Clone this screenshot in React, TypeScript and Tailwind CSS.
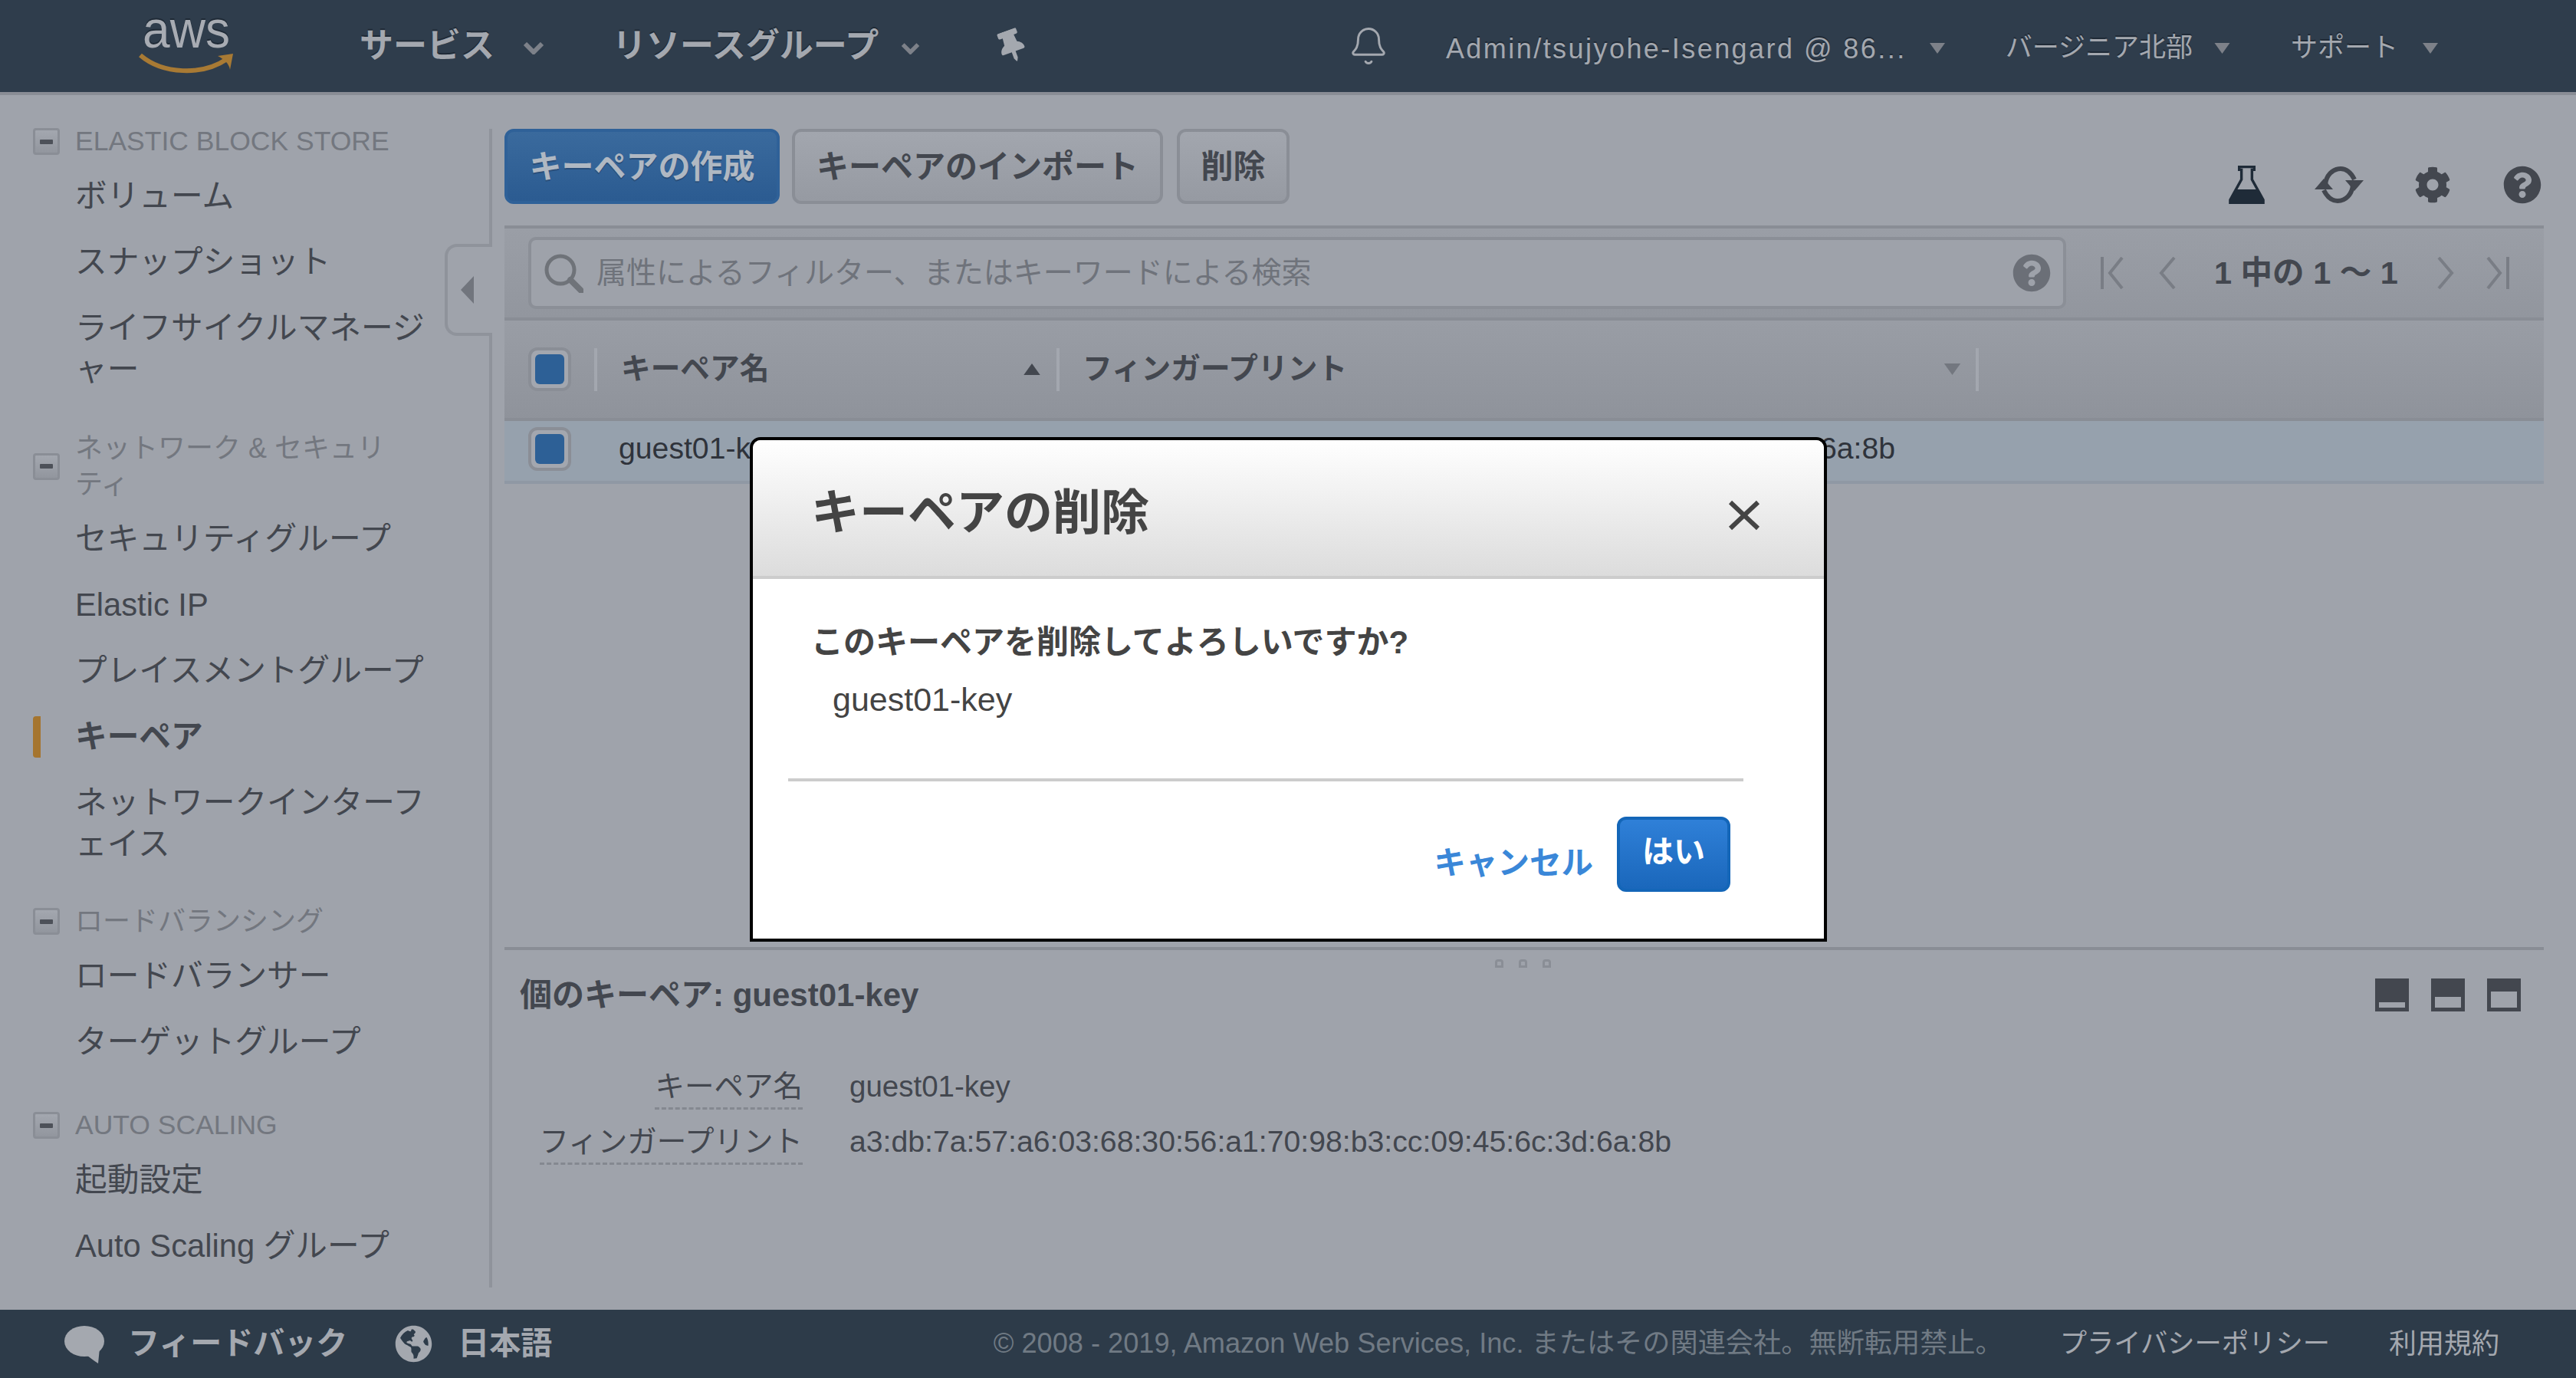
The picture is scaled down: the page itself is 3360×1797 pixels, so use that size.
import React from "react";
import { Bell } from "lucide-react";
import { FaCog, FaGlobeAmericas, FaQuestionCircle, FaThumbtack } from "react-icons/fa";

function Tri({ className }: { className: string }) {
  return (
    <svg viewBox="0 0 20 14" className={className} fill="currentColor">
      <path d="M0 0H20L10 14Z" />
    </svg>
  );
}

function Chevron({ className }: { className: string }) {
  return (
    <svg viewBox="0 0 28 16" className={className} fill="none" stroke="currentColor" strokeWidth="6">
      <path d="M3 2L14 13L25 2" />
    </svg>
  );
}

function AwsLogo() {
  return (
    <svg viewBox="0 0 122 120" className="h-[120px] w-[122px] shrink-0 overflow-visible">
      <text x="4" y="62" textLength="114" lengthAdjust="spacingAndGlyphs" fontFamily="'Liberation Sans', sans-serif" fontSize="68" fill="#a8acb3">
        aws
      </text>
      <path d="M1 72C30 97 82 99 114 77" fill="none" stroke="#a87a34" strokeWidth="6" />
      <path d="M102 73L122 70L118 91C117 83 110 77 102 73Z" fill="#a87a34" />
    </svg>
  );
}

function Flask() {
  return (
    <svg viewBox="0 0 50 50" className="h-[50px] w-[49px] shrink-0">
      <path d="M15 1H35V5H32V18L47 45V50H3V45L18 18V5H15Z" fill="none" stroke="#1f2b38" strokeWidth="3.5" />
      <path d="M11 31H39L48 46V50H2V46Z" fill="#1f2b38" />
    </svg>
  );
}

function Refresh() {
  return (
    <svg viewBox="0 0 64 50" className="h-[50px] w-[64px] shrink-0" fill="none" stroke="#43474f" strokeWidth="6">
      <path d="M14 25C15 13 23 4 34 4C43 4 48 10 52 18" />
      <path d="M50 25C49 37 41 46 30 46C21 46 16 40 12 32" />
      <path d="M40 19H64L52 33Z" fill="#43474f" stroke="none" />
      <path d="M0 31H24L12 17Z" fill="#43474f" stroke="none" />
    </svg>
  );
}

function Search() {
  return (
    <svg viewBox="0 0 52 52" className="h-[52px] w-[52px] shrink-0" fill="none" stroke="#6f7379">
      <circle cx="22" cy="22" r="18" strokeWidth="5" />
      <path d="M35 35L49 49" strokeWidth="8" strokeLinecap="round" />
    </svg>
  );
}

function PagerIcon({ d, w }: { d: string; w: number }) {
  return (
    <svg viewBox={`0 0 ${w} 42`} style={{ width: w, height: 42 }} className="shrink-0" fill="none" stroke="#797d85" strokeWidth="4">
      <path d={d} />
    </svg>
  );
}

function Bubble() {
  return (
    <svg viewBox="0 0 53 50" className="h-[50px] w-[53px] shrink-0" fill="#a4a8af">
      <ellipse cx="26" cy="21" rx="26" ry="20" />
      <path d="M26 36L46 30L44 50C38 46 32 42 26 36Z" />
    </svg>
  );
}

function PanelIcon({ h }: { h: number }) {
  return (
    <div className="flex h-[43px] w-[44px] shrink-0 flex-col justify-end bg-[#43474f] px-[5px] pb-[5px]">
      <div className="bg-[#9fa3ab]" style={{ height: h }} />
    </div>
  );
}

function Collapse() {
  return (
    <div className="flex h-[35px] w-[35px] shrink-0 items-center justify-center rounded-[4px] border-[3px] border-[#8a8e96] bg-gradient-to-b from-[#a3a7af] to-[#92969e]">
      <div className="h-[6px] w-[17px] rounded-[1px] bg-[#4d5159]" />
    </div>
  );
}

function Heading({ className, children }: { className: string; children: React.ReactNode }) {
  return (
    <div className={`flex items-center gap-[20px] pl-[43px] leading-[47px] text-[#73777f] ${className}`}>
      <Collapse />
      <div className="whitespace-nowrap">{children}</div>
    </div>
  );
}

function Item({ children, active }: { children: React.ReactNode; active?: boolean }) {
  return (
    <div className={`flex items-center whitespace-nowrap py-[16px] pl-[43px] text-[41.7px] leading-[54px] ${active ? "font-bold" : ""}`}>
      <div className={`mr-[45px] h-[54px] w-[10px] rounded-l-[4px] ${active ? "bg-[#a5752f]" : ""}`} />
      <div>{children}</div>
    </div>
  );
}

function Check() {
  return (
    <div className="flex h-[57px] w-[56px] items-center justify-center rounded-[12px] border-4 border-[#8a8e96] bg-[#a3a7af]">
      <div className="h-[39px] w-[38px] rounded-[6px] bg-[#2d6096]" />
    </div>
  );
}

function GrayButton({ className, children }: { className: string; children: React.ReactNode }) {
  return (
    <button className={`flex h-[98px] items-center justify-center rounded-[12px] border-4 border-[#8a8e96] bg-gradient-to-b from-[#a2a6ae] to-[#969aa2] text-[42px] font-bold text-[#43474f] ${className}`}>
      {children}
    </button>
  );
}

export default function App() {
  return (
    <div className="relative flex h-screen w-full flex-col overflow-hidden bg-[#9fa3ab] text-[#43474f] [font-family:'Liberation_Sans','Noto_Sans_CJK_JP',sans-serif]">
      <header className="flex h-[124px] shrink-0 items-center border-b-4 border-[#898d95] bg-[#2f3d4c] pl-[182px] pr-[180px] text-[#a4a8af] [text-shadow:0_-2px_0_#1f2a36]">
        <AwsLogo />
        <span className="ml-[165px] text-[44px] font-bold">サービス</span>
        <Chevron className="ml-[37px] mt-[6px] h-[16px] w-[28px] text-[#7d8189]" />
        <span className="ml-[89px] text-[44px] font-bold">リソースグループ</span>
        <Chevron className="ml-[29px] mt-[6px] h-[15px] w-[25px] text-[#7d8189]" />
        <FaThumbtack className="ml-[101px] h-[42px] w-[37px] -rotate-[20deg] text-[#a4a8af]" />
        <Bell className="ml-auto h-[58px] w-[54px] text-[#a4a8af]" strokeWidth={1.3} />
        <span className="ml-[74px] mt-[8px] text-[36px] tracking-[2.45px]">Admin/tsujyohe-Isengard @ 86...</span>
        <Tri className="ml-[29px] mt-[6px] h-[14px] w-[22px] text-[#7d8189]" />
        <span className="ml-[78px] mt-[4px] text-[35px]">バージニア北部</span>
        <Tri className="ml-[28px] mt-[6px] h-[14px] w-[21px] text-[#7d8189]" />
        <span className="ml-[79px] mt-[4px] text-[35px]">サポート</span>
        <Tri className="ml-[32px] mt-[6px] h-[14px] w-[20px] text-[#7d8189]" />
      </header>

      <main className="flex min-h-0 flex-1">
        <aside className="relative mb-[29px] mt-[44px] w-[642px] shrink-0 border-r-4 border-[#8f939b]">
          <div className="-mt-[7px]">
            <Heading className="mb-[5px] text-[35.5px]">ELASTIC BLOCK STORE</Heading>
            <Item>ボリューム</Item>
            <Item>スナップショット</Item>
            <Item>
              ライフサイクルマネージ
              <br />
              ャー
            </Item>
            <Heading className="mb-[5px] mt-[36px] text-[36px]">
              ネットワーク &amp; セキュリ
              <br />
              ティ
            </Heading>
            <Item>セキュリティグループ</Item>
            <Item>Elastic IP</Item>
            <Item>プレイスメントグループ</Item>
            <Item active>キーペア</Item>
            <Item>
              ネットワークインターフ
              <br />
              ェイス
            </Item>
            <Heading className="mb-[5px] mt-[34px] text-[36px]">ロードバランシング</Heading>
            <Item>ロードバランサー</Item>
            <Item>ターゲットグループ</Item>
            <Heading className="mb-[5px] mt-[42px] text-[35.5px]">AUTO SCALING</Heading>
            <Item>起動設定</Item>
            <Item>Auto Scaling グループ</Item>
          </div>
          <div className="absolute -right-[4px] top-[150px] flex h-[120px] w-[62px] items-center rounded-l-[16px] border-y-4 border-l-4 border-[#8f939b] bg-[#9fa3ab] pl-[17px]">
            <div className="h-0 w-0 border-y-[18px] border-r-[17px] border-y-transparent border-r-[#71757d]" />
          </div>
        </aside>

        <section className="flex min-w-0 flex-1 flex-col pl-[16px] pr-[42px] pt-[44px]">
          <div className="flex h-[98px] shrink-0 items-start">
            <button className="flex h-[98px] w-[359px] items-center justify-center rounded-[12px] border-4 border-[#2f6198] bg-gradient-to-b from-[#3a6a9d] to-[#2b5b91] text-[42px] font-bold text-[#b0b8c2] [text-shadow:0_2px_0_#2a4f7a]">
              キーペアの作成
            </button>
            <GrayButton className="ml-[16px] w-[484px]">キーペアのインポート</GrayButton>
            <GrayButton className="ml-[18px] w-[147px]">削除</GrayButton>
            <div className="ml-auto mr-[3px] mt-[48px] flex items-center">
              <Flask />
              <div className="ml-[64px]">
                <Refresh />
              </div>
              <FaCog className="ml-[66px] h-[50px] w-[48px] text-[#43474f]" />
              <FaQuestionCircle className="ml-[68px] h-[50px] w-[50px] text-[#43474f]" />
            </div>
          </div>

          <div className="mt-[28px] flex h-[124px] shrink-0 items-center border-y-4 border-[#898d95] bg-gradient-to-b from-[#9a9ea6] to-[#92969e] pl-[31px]">
            <div className="flex h-[94px] w-[2006px] shrink-0 items-center rounded-[10px] border-4 border-[#8b8f97] bg-[#9ea2aa] pl-[16px] pr-[16px]">
              <Search />
              <span className="ml-[17px] text-[39px] text-[#6f737b]">属性によるフィルター、またはキーワードによる検索</span>
              <FaQuestionCircle className="ml-auto h-[50px] w-[50px] text-[#6b6f77]" />
            </div>
            <div className="ml-[45px] flex items-center">
              <PagerIcon w={30} d="M2 0V42M28 1L12 21L28 41" />
              <div className="ml-[45px]">
                <PagerIcon w={23} d="M21 1L4 21L21 41" />
              </div>
              <span className="ml-[50px] w-[237px] whitespace-nowrap text-center text-[41.5px] font-bold">1 中の 1 〜 1</span>
              <div className="ml-[54px]">
                <PagerIcon w={23} d="M2 1L19 21L2 41" />
              </div>
              <div className="ml-[41px]">
                <PagerIcon w={30} d="M28 0V42M2 1L18 21L2 41" />
              </div>
            </div>
          </div>

          <div className="flex h-[131px] shrink-0 items-center border-b-4 border-[#898d95] bg-gradient-to-b from-[#999da5] to-[#8f939b] text-[38.7px] font-bold">
            <div className="flex w-[117px] justify-center">
              <Check />
            </div>
            <div className="flex h-[56px] w-[603px] items-center border-l-4 border-[#a3a7af] pl-[31px] pr-[21px]">
              <span>キーペア名</span>
              <Tri className="ml-auto h-[15px] w-[22px] rotate-180 text-[#43474f]" />
            </div>
            <div className="flex h-[56px] w-[1203px] items-center border-x-4 border-[#a3a7af] pl-[30px] pr-[19px]">
              <span>フィンガープリント</span>
              <Tri className="ml-auto h-[15px] w-[23px] text-[#73777f]" />
            </div>
          </div>

          <div className="flex h-[82px] shrink-0 items-center border-b-4 border-[#8f98a4] bg-[#96a1ad] pb-[6px] text-[39.2px] text-[#2f333b]">
            <div className="flex w-[117px] justify-center">
              <Check />
            </div>
            <div className="w-[625px] pl-[32px]">guest01-key</div>
            <div className="whitespace-nowrap">a3:db:7a:57:a6:03:68:30:56:a1:70:98:b3:cc:09:45:6c:3d:6a:8b</div>
          </div>

          <div className="flex-1" />

          <div className="relative h-[473px] shrink-0 border-t-4 border-[#898d95] pl-[20px] pr-[30px] text-[38.5px]">
            <div className="absolute left-[1292px] top-[12px] flex gap-[20px]">
              <div className="h-[11px] w-[11px] rounded-t-[4px] border-[3px] border-[#8a8e96]" />
              <div className="h-[11px] w-[11px] rounded-t-[4px] border-[3px] border-[#8a8e96]" />
              <div className="h-[11px] w-[11px] rounded-t-[4px] border-[3px] border-[#8a8e96]" />
            </div>
            <div className="mt-[37px] flex h-[43px] items-center">
              <span className="text-[42px] font-bold">個のキーペア: guest01-key</span>
              <div className="ml-auto flex gap-[29px]">
                <PanelIcon h={7} />
                <PanelIcon h={14} />
                <PanelIcon h={21} />
              </div>
            </div>
            <div className="mt-[71px] grid grid-cols-[369px_1fr] gap-x-[61px] gap-y-[15px] leading-[54px]">
              <div className="text-right">
                <span className="inline-block border-b-[3px] border-dashed border-[#848890]">キーペア名</span>
              </div>
              <div>guest01-key</div>
              <div className="text-right">
                <span className="inline-block border-b-[3px] border-dashed border-[#848890]">フィンガープリント</span>
              </div>
              <div className="text-[39.2px]">a3:db:7a:57:a6:03:68:30:56:a1:70:98:b3:cc:09:45:6c:3d:6a:8b</div>
            </div>
          </div>
        </section>
      </main>

      <footer className="flex h-[89px] shrink-0 items-center bg-[#2d3b49] pl-[84px] pr-[100px] text-[#a4a8af]">
        <Bubble />
        <span className="ml-[30px] text-[41px] font-bold">フィードバック</span>
        <FaGlobeAmericas className="ml-[62px] h-[49px] w-[49px]" />
        <span className="ml-[33px] text-[41px] font-bold">日本語</span>
        <span className="ml-auto text-[36.2px] text-[#707a84]">© 2008 - 2019, Amazon Web Services, Inc. またはその関連会社。無断転用禁止。</span>
        <span className="ml-[74px] text-[35.3px]">プライバシーポリシー</span>
        <span className="ml-[77px] text-[36px]">利用規約</span>
      </footer>

      <div className="absolute left-[978px] top-[570px] flex h-[658px] w-[1405px] flex-col overflow-hidden rounded-t-[14px] border-4 border-black bg-white text-[#444444]">
        <div className="flex h-[181px] shrink-0 items-center border-b-4 border-[#cccccc] bg-gradient-to-b from-white to-[#dcdcdc] pl-[76px] pr-[83px] pt-[12px]">
          <span className="text-[63px] font-bold">キーペアの削除</span>
          <svg viewBox="0 0 42 40" className="ml-auto mt-[6px] h-[40px] w-[42px]" stroke="#444444" strokeWidth="6">
            <path d="M3 3L39 37M39 3L3 37" />
          </svg>
        </div>
        <div className="pl-[76px] pt-[56px]">
          <div className="text-[42px] font-bold leading-[54px]">このキーペアを削除してよろしいですか?</div>
          <div className="ml-[28px] mt-[20px] text-[43px] leading-[54px]">guest01-key</div>
        </div>
        <div className="ml-[46px] mt-[76px] h-[4px] w-[1246px] bg-[#cccccc]" />
        <div className="mt-[46px] flex items-start pr-[122px]">
          <span className="ml-auto mt-[34px] text-[41.5px] font-bold leading-[54px] text-[#3a87d8]">キャンセル</span>
          <button className="ml-[31px] flex h-[98px] w-[148px] items-center justify-center rounded-[12px] border-4 border-[#1466b8] bg-gradient-to-b from-[#2f80d8] to-[#1a67bb] pb-[4px] text-[41px] font-bold text-white">
            はい
          </button>
        </div>
      </div>
    </div>
  );
}
